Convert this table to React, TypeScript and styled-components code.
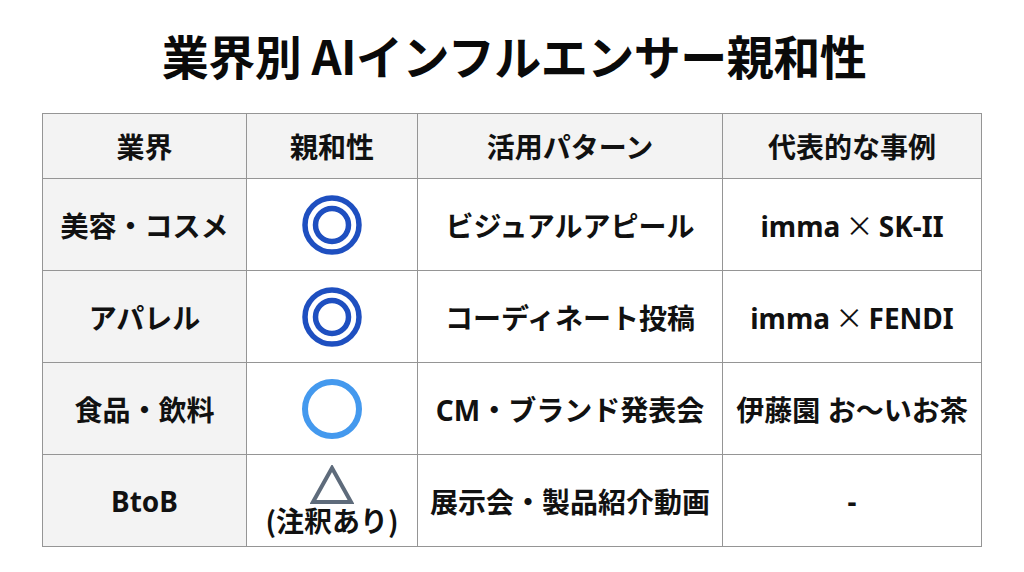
import React from "react";
import styled, { createGlobalStyle } from "styled-components";

const Global = createGlobalStyle`
  html, body { margin: 0; padding: 0; background: #ffffff; }
  body { font-family: "Noto Sans", "Noto Sans CJK JP", sans-serif; color: #111; }
`;

const Page = styled.div`
  width: 1024px;
  height: 572px;
  box-sizing: border-box;
  padding: 0 42px;
  display: flex;
  flex-direction: column;
`;

const Title = styled.h1`
  margin: 0;
  height: 113px;
  display: flex;
  align-items: center;
  justify-content: center;
  padding-bottom: 4px;
  padding-left: 4px;
  box-sizing: border-box;
  font-family: "Noto Sans CJK JP", sans-serif;
  font-weight: 700;
  font-size: 47px;
  letter-spacing: -0.5px;
  color: #0a0a0a;
`;

const Table = styled.table`
  width: 940px;
  border-collapse: collapse;
  table-layout: fixed;
`;

const Th = styled.th<{ $w: number }>`
  width: ${(p) => p.$w}px;
  height: 64px;
  padding: 0;
  background: #f3f3f3;
  border: 1.5px solid #959595;
  font-family: "Noto Sans CJK JP", sans-serif;
  font-weight: 700;
  font-size: 28px;
  color: #111;
  text-align: center;
  vertical-align: middle;
`;

const Td = styled.td<{ $head?: boolean }>`
  height: 91px;
  padding: 0;
  background: ${(p) => (p.$head ? "#f3f3f3" : "#ffffff")};
  border: 1.5px solid #959595;
  font-family: "Noto Sans", "Noto Sans CJK JP", sans-serif;
  font-weight: 700;
  font-size: 28px;
  color: #111;
  text-align: center;
  vertical-align: middle;
  white-space: nowrap;
`;

const Times = styled.span`
  font-family: "Noto Sans CJK JP", sans-serif;
  font-weight: 400;
  margin: 0 -2px;
`;

const MarkCell = styled.div`
  display: flex;
  flex-direction: column;
  align-items: center;
  justify-content: center;
  line-height: 1.1;
`;

const Note = styled.span`
  font-family: "Noto Sans CJK JP", sans-serif;
  font-size: 28px;
  font-weight: 700;
  margin-top: 0px;
`;

const DoubleCircle = () => (
  <svg width="62" height="62" viewBox="0 0 62 62">
    <circle cx="31" cy="31" r="27" fill="none" stroke="#1e4fc0" strokeWidth="5.5" />
    <circle cx="31" cy="31" r="16.5" fill="none" stroke="#1e4fc0" strokeWidth="5.5" />
  </svg>
);

const Circle = () => (
  <svg width="62" height="62" viewBox="0 0 62 62">
    <circle cx="31" cy="31" r="27" fill="none" stroke="#4499ee" strokeWidth="6" />
  </svg>
);

const Triangle = () => (
  <svg width="44" height="40" viewBox="0 0 44 40">
    <polygon points="22,3 41,37 3,37" fill="none" stroke="#5e6b7b" strokeWidth="4" strokeLinejoin="miter" />
  </svg>
);

type Row = { industry: string; mark: React.ReactNode; pattern: string; example: React.ReactNode };

const rows: Row[] = [
  {
    industry: "美容・コスメ",
    mark: <DoubleCircle />,
    pattern: "ビジュアルアピール",
    example: (
      <>
        imma <Times>×</Times> SK-II
      </>
    ),
  },
  {
    industry: "アパレル",
    mark: <DoubleCircle />,
    pattern: "コーディネート投稿",
    example: (
      <>
        imma <Times>×</Times> FENDI
      </>
    ),
  },
  { industry: "食品・飲料", mark: <Circle />, pattern: "CM・ブランド発表会", example: "伊藤園 お〜いお茶" },
  {
    industry: "BtoB",
    mark: (
      <>
        <Triangle />
        <Note>(注釈あり)</Note>
      </>
    ),
    pattern: "展示会・製品紹介動画",
    example: "-",
  },
];

export default function App() {
  return (
    <Page>
      <Global />
      <Title>業界別 AIインフルエンサー親和性</Title>
      <Table>
        <thead>
          <tr>
            <Th $w={203}>業界</Th>
            <Th $w={170}>親和性</Th>
            <Th $w={304}>活用パターン</Th>
            <Th $w={258}>代表的な事例</Th>
          </tr>
        </thead>
        <tbody>
          {rows.map((r) => (
            <tr key={r.industry}>
              <Td $head>{r.industry}</Td>
              <Td>
                <MarkCell>{r.mark}</MarkCell>
              </Td>
              <Td>{r.pattern}</Td>
              <Td>{r.example}</Td>
            </tr>
          ))}
        </tbody>
      </Table>
    </Page>
  );
}
